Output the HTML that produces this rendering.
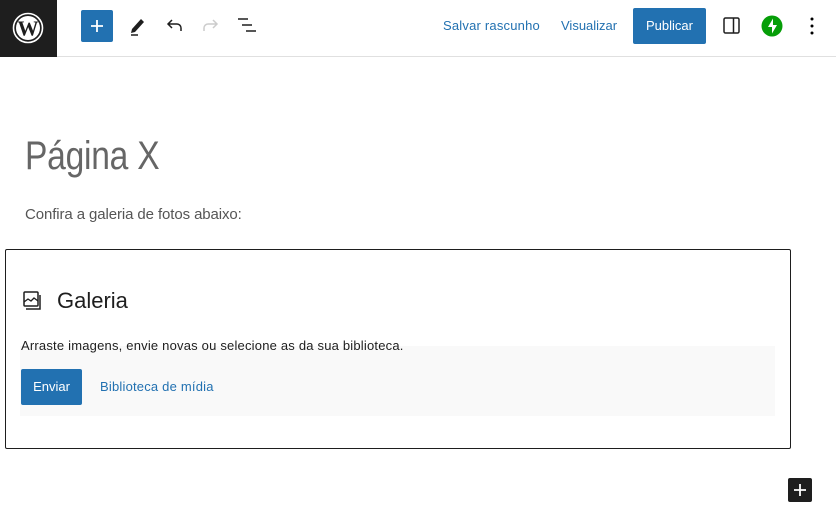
<!DOCTYPE html>
<html><head><meta charset="utf-8"><style>
*{margin:0;padding:0;box-sizing:border-box}
body{width:836px;height:530px;background:#fff;font-family:"Liberation Sans",sans-serif;position:relative;overflow:hidden}
.a{position:absolute}
.top{left:0;top:0;width:836px;height:57px;border-bottom:1px solid #e0e0e0}
.wp{left:0;top:0;width:57px;height:57px;background:#1e1e1e}
.btn{background:#2271b1;color:#fff;border-radius:2px;font-weight:500}
.link{color:#2271b1;font-size:13px;font-weight:500}
</style></head><body>
<div class="a top"></div>
<div class="a wp"><svg class="a" style="left:12px;top:12px" width="32" height="32" viewBox="0 0 32 32"><circle cx="16" cy="16" r="14.5" fill="none" stroke="#fff" stroke-width="1.6"/><circle cx="16" cy="16" r="12" fill="#fff"/><text x="16" y="23.5" text-anchor="middle" font-family="Liberation Serif,serif" font-weight="bold" font-size="21" fill="#1e1e1e">W</text></svg></div>
<div class="a btn" style="left:81px;top:10px;width:32px;height:32px"><svg class="a" style="left:8px;top:8px" width="16" height="16"><path d="M8 2v12M2 8h12" stroke="#fff" stroke-width="1.8"/></svg></div>
<svg class="a" style="left:128px;top:14px" width="22" height="24" viewBox="0 0 22 24"><path d="M4 15l9-10 3 3-9 10-4 1z" fill="#1e1e1e"/><path d="M3 21h7" stroke="#1e1e1e" stroke-width="1.5"/></svg>
<svg class="a" style="left:164px;top:15px" width="22" height="22" viewBox="0 0 22 22"><path d="M8 5L4 9l4 4M4 9h9a4 4 0 0 1 4 4v3" fill="none" stroke="#1e1e1e" stroke-width="1.5"/></svg>
<svg class="a" style="left:199px;top:15px" width="22" height="22" viewBox="0 0 22 22"><path d="M14 5l4 4-4 4M18 9H9a4 4 0 0 0-4 4v3" fill="none" stroke="#ccc" stroke-width="1.5"/></svg>
<svg class="a" style="left:236px;top:17px" width="22" height="18" viewBox="0 0 22 18"><path d="M2 2h10M6 8h10M10 14h10" stroke="#1e1e1e" stroke-width="1.5"/></svg>
<div class="a link" style="left:443px;top:18px;letter-spacing:0.2px">Salvar rascunho</div>
<div class="a link" style="left:561px;top:18px">Visualizar</div>
<div class="a btn" style="left:633px;top:8px;width:73px;height:36px;font-size:13px;line-height:36px;text-align:center">Publicar</div>
<svg class="a" style="left:722px;top:16px" width="20" height="20"><rect x="2" y="2" width="15" height="15" rx="1.5" fill="none" stroke="#1e1e1e" stroke-width="1.5"/><path d="M11.5 2v15" stroke="#1e1e1e" stroke-width="1.5"/></svg>
<svg class="a" style="left:761px;top:15px" width="22" height="22"><circle cx="11" cy="11" r="10.5" fill="#069e08"/><path d="M12 3.5L7 12h4v6.5L16 10h-4z" fill="#fff"/></svg>
<svg class="a" style="left:808px;top:16px" width="8" height="20"><circle cx="4" cy="3" r="1.5"/><circle cx="4" cy="10" r="1.5"/><circle cx="4" cy="17" r="1.5"/></svg>
<div class="a" style="left:25px;top:134px;font-size:40px;color:#666;font-weight:300;transform:scaleX(0.84);transform-origin:left top;letter-spacing:-0.3px">Página X</div>
<div class="a" style="left:25px;top:206px;font-size:15px;color:#555;letter-spacing:-0.1px">Confira a galeria de fotos abaixo:</div>
<div class="a" style="left:5px;top:249px;width:786px;height:200px;border:1px solid #1e1e1e;border-radius:2px"></div>
<svg class="a" style="left:22px;top:290px" width="22" height="22" viewBox="0 0 22 22"><rect x="2" y="2" width="14" height="14" rx="1" fill="none" stroke="#1e1e1e" stroke-width="1.5"/><path d="M2 12l4-3 3 2 3-3 4 3" fill="none" stroke="#1e1e1e" stroke-width="1.3"/><path d="M4 19h14V5" fill="none" stroke="#1e1e1e" stroke-width="1.5"/></svg>
<div class="a" style="left:57px;top:288px;font-size:22px;color:#1e1e1e">Galeria</div>
<div class="a" style="left:20px;top:346px;width:755px;height:70px;background:#f9f9f9"></div>
<div class="a" style="left:21px;top:338px;font-size:13px;color:#1e1e1e;letter-spacing:0.2px">Arraste imagens, envie novas ou selecione as da sua biblioteca.</div>
<div class="a btn" style="left:21px;top:369px;width:61px;height:36px;font-size:13px;line-height:36px;text-align:center">Enviar</div>
<div class="a link" style="left:100px;top:379px;letter-spacing:0.2px">Biblioteca de mídia</div>
<div class="a" style="left:788px;top:478px;width:24px;height:24px;background:#1e1e1e;border-radius:2px"><svg class="a" style="left:5px;top:5px" width="14" height="14"><path d="M7 1v12M1 7h12" stroke="#fff" stroke-width="1.8"/></svg></div>
</body></html>
